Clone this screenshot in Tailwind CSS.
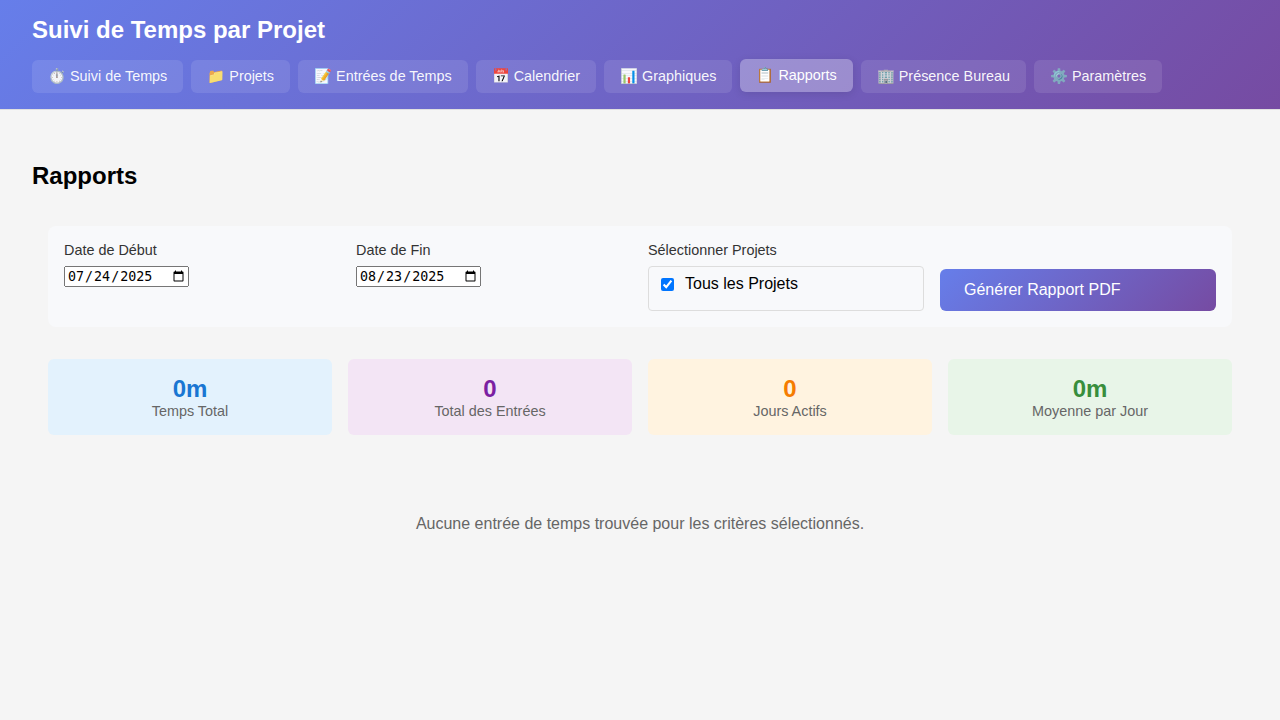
<!DOCTYPE html>
<html lang="fr">
<head>
<meta charset="utf-8">
<title>Suivi de Temps par Projet</title>
<script src="https://cdn.jsdelivr.net/npm/@tailwindcss/browser@4"></script>
</head>
<body class="min-h-screen bg-[#f5f5f5] font-['Liberation_Sans',Arial,sans-serif] text-base leading-[normal] text-black">
<header class="h-[110px] border-b border-[#e0e0e0] bg-[linear-gradient(135deg,#667eea_0%,#764ba2_100%)] px-8 pt-4">
  <h1 class="mb-4 h-7 text-[24px] leading-7 font-bold text-white">Suivi de Temps par Projet</h1>
  <nav class="flex gap-[7.96px] text-[14.4px] leading-[17px] whitespace-nowrap text-white/95">
    <a class="rounded-md bg-white/10 px-4 py-2">⏱️ Suivi de Temps</a>
    <a class="rounded-md bg-white/10 px-4 py-2">📁 Projets</a>
    <a class="rounded-md bg-white/10 px-4 py-2">📝 Entrées de Temps</a>
    <a class="rounded-md bg-white/10 px-4 py-2">📅 Calendrier</a>
    <a class="rounded-md bg-white/10 px-4 py-2">📊 Graphiques</a>
    <a class="-translate-y-px rounded-md bg-white/30 px-4 py-2 text-white shadow-[0_2px_8px_rgba(0,0,0,0.1)]">📋 Rapports</a>
    <a class="rounded-md bg-white/10 px-4 py-2">🏢 Présence Bureau</a>
    <a class="rounded-md bg-white/10 px-4 py-2">⚙️ Paramètres</a>
  </nav>
</header>
<main class="px-8 pt-[52px]">
  <h2 class="h-7 text-[24px] leading-7 font-bold">Rapports</h2>
  <div class="px-4 pt-9">
    <section class="mb-8 grid h-[101px] grid-cols-4 gap-4 rounded-lg bg-[#f8f9fb] p-4">
      <div class="flex flex-col items-start gap-2">
        <label for="debut" class="h-4 text-[14.4px] leading-4 text-[#333]">Date de Début</label>
        <input id="debut" type="date" value="2025-07-24" class="[all:revert]">
      </div>
      <div class="flex flex-col items-start gap-2">
        <label for="fin" class="h-4 text-[14.4px] leading-4 text-[#333]">Date de Fin</label>
        <input id="fin" type="date" value="2025-08-23" class="[all:revert]">
      </div>
      <div class="flex flex-col gap-2">
        <span class="h-4 text-[14.4px] leading-4 text-[#333]">Sélectionner Projets</span>
        <div class="h-[45px] rounded border border-[#ddd] px-3 pt-2">
          <label class="flex items-start leading-[18px]"><input type="checkbox" checked class="mt-[3px] mr-[11px] size-[13px]">Tous les Projets</label>
        </div>
      </div>
      <button class="h-[42px] self-end rounded-md bg-[linear-gradient(135deg,#667eea_0%,#764ba2_100%)] px-6 text-left text-white">Générer Rapport PDF</button>
    </section>
    <section class="grid grid-cols-4 gap-4 text-center">
      <div class="h-[76px] rounded-md bg-[#e3f2fd] pt-4">
        <div class="h-7 text-[24px] leading-7 font-bold text-[#1976d2]">0m</div>
        <div class="text-[14.4px] leading-4 text-[#666]">Temps Total</div>
      </div>
      <div class="h-[76px] rounded-md bg-[#f3e5f5] pt-4">
        <div class="h-7 text-[24px] leading-7 font-bold text-[#7b1fa2]">0</div>
        <div class="text-[14.4px] leading-4 text-[#666]">Total des Entrées</div>
      </div>
      <div class="h-[76px] rounded-md bg-[#fff3e0] pt-4">
        <div class="h-7 text-[24px] leading-7 font-bold text-[#f57c00]">0</div>
        <div class="text-[14.4px] leading-4 text-[#666]">Jours Actifs</div>
      </div>
      <div class="h-[76px] rounded-md bg-[#e8f5e8] pt-4">
        <div class="h-7 text-[24px] leading-7 font-bold text-[#388e3c]">0m</div>
        <div class="text-[14.4px] leading-4 text-[#666]">Moyenne par Jour</div>
      </div>
    </section>
    <p class="pt-20 text-center leading-[18px] text-[#666]">Aucune entrée de temps trouvée pour les critères sélectionnés.</p>
  </div>
</main>
</body>
</html>
